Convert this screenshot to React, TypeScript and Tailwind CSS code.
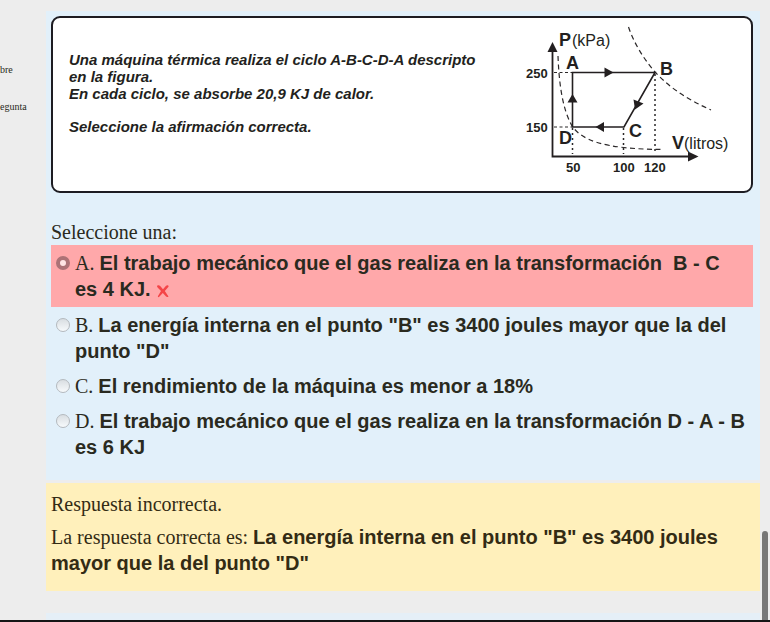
import { useState } from "react";

const sans = "font-['Liberation_Sans',Arial,sans-serif]";

function CycleDiagram() {
  return (
    <svg
      viewBox="520 20 220 160"
      width="220"
      height="160"
      role="img"
      aria-label="Diagrama P-V del ciclo A-B-C-D-A"
      className="shrink-0 font-['Liberation_Sans',Arial,sans-serif]"
      fill="#231f20"
    >
      <g fill="none" stroke="#2b2829" strokeWidth="1.2">
        <path strokeDasharray="5 3.5" d="M558 56C559 82 562 108 572 126C582 140 602 149 663 149.5" />
        <path strokeDasharray="5 3.5" d="M628.5 27C634 43 643 58 655 72C672 90 689 100 711 110" />
        <path strokeDasharray="3 2.5" d="M554 72.5H572M554 127H572" />
        <path strokeDasharray="2 3" d="M572.5 128V154M623.5 128V154M655 74V154" strokeWidth="1.5" />
      </g>
      <path d="M552.5 46V156.5H694" fill="none" stroke="#231f20" strokeWidth="1.8" />
      <path d="M572.5 127V72.5H655L624 127Z" fill="none" stroke="#231f20" strokeWidth="1.6" />
      <path d="M552.5 42L557.5 52H547.5Z" />
      <path d="M698.5 156.5L688 151.5V161.5Z" />
      <path d="M613.5 72.5L604.5 67.5V77.5Z" />
      <path d="M572.5 94L577.5 102.5H567.5Z" />
      <path d="M595.5 127L604 122V132Z" />
      <path d="M635 109.5L633.5 99.5L643.5 103.5Z" />
      <g fontSize="18" fontWeight="700">
        <text x="559" y="46">P</text>
        <text x="672" y="149">V</text>
        <text x="566" y="69">A</text>
        <text x="660" y="75">B</text>
        <text x="629" y="137">C</text>
        <text x="559" y="144">D</text>
      </g>
      <g fontSize="16">
        <text x="572" y="46">(kPa)</text>
        <text x="684" y="149">(litros)</text>
      </g>
      <g fontSize="13" fontWeight="700">
        <text x="526" y="78">250</text>
        <text x="526" y="132">150</text>
        <text x="566" y="172">50</text>
        <text x="613" y="172">100</text>
        <text x="644" y="172">120</text>
      </g>
    </svg>
  );
}

function WrongMark() {
  return (
    <svg viewBox="0 0 14 14" width="14" height="14" aria-label="Incorrecta" className="inline-block align-[-2px]">
      <path
        d="M1 2.5C1 1 3 .6 4.2 2L7 5.200L10 1.800C11.500 .6 13 1.500 12.500 2.800L8.800 7L12.500 12.500C11.500 13.500 10.500 13 9.800 12.200L6.800 8.900L3.500 12.600C2.500 13.600 1.500 13.200 2 12L5 7L1.800 3.700Z"
        fill="#f44548"
      />
    </svg>
  );
}

type Option = { id: string; text: string; wrong?: boolean };

const options: Option[] = [
  {
    id: "A",
    text: "El trabajo mecánico que el gas realiza en la transformación \u00a0B - C es\u00a04\u00a0KJ.",
    wrong: true,
  },
  { id: "B", text: 'La energía interna en el punto "B" es 3400 joules mayor que la del punto "D"' },
  { id: "C", text: "El rendimiento de la máquina es menor a 18%" },
  { id: "D", text: "El trabajo mecánico que el gas realiza en la transformación D - A - B es 6 KJ" },
];

export default function App() {
  const [selected, setSelected] = useState("A");

  return (
    <div className="flex min-h-screen flex-col bg-[#ededed] font-['Liberation_Serif','Times_New_Roman',serif] text-[#2a2a20]">
      <div className="flex grow">
        <aside className="w-[46px] shrink-0 pt-[64px] text-[10px] leading-3">
          <p>bre</p>
          <p className="mt-[25px]">egunta</p>
        </aside>

        <main className="flex min-w-0 grow flex-col pt-[11px]">
          <section className="bg-[#e2f0fa] pt-[5px] pr-[7px] pb-4 pl-[5px]">
            <div className="flex justify-between rounded-[9px] border-2 border-[#1d1c22] bg-white pt-[2px] pr-[11px] pb-[11px] pl-4">
              <div className={`${sans} pt-[31px] text-[15px] leading-[17px] font-bold text-[#231f20] italic`}>
                <p>
                  Una máquina térmica realiza el ciclo A-B-C-D-A descripto
                  <br />
                  en la figura.
                </p>
                <p>En cada ciclo, se absorbe 20,9 KJ de calor.</p>
                <p className="mt-4">Seleccione la afirmación correcta.</p>
              </div>
              <CycleDiagram />
            </div>

            <fieldset className="mt-[26px] text-[20px] leading-[26px]">
              <legend>Seleccione una:</legend>
              <div className="flex flex-col">
                {options.map((o) => (
                  <label
                    key={o.id}
                    className={`flex items-start gap-[5px] pt-[5px] pl-[5px] ${o.wrong ? "bg-[#ffa8aa] pb-[5px]" : "pb-1"}`}
                  >
                    <input
                      type="radio"
                      name="respuesta"
                      value={o.id}
                      checked={selected === o.id}
                      onChange={() => setSelected(o.id)}
                      className="mt-[6px] size-[14px] shrink-0 appearance-none rounded-full border border-[#b4b9be] bg-linear-to-b from-[#d9dee2] to-[#f7fafc] checked:border-4 checked:border-[#ad7276] checked:bg-[#ffe4e4] checked:bg-none"
                    />
                    <span>
                      {o.id}. <strong className={sans}>{o.text}</strong>
                      {o.wrong && (
                        <>
                          {" "}
                          <WrongMark />
                        </>
                      )}
                    </span>
                  </label>
                ))}
              </div>
            </fieldset>
          </section>

          <section className="mt-[3px] bg-[#fff0bb] px-[5px] pt-2 pb-[15px] text-[20px] leading-[26px] text-[#332b14]">
            <p>Respuesta incorrecta.</p>
            <p className="mt-[7px]">
              La respuesta correcta es:{" "}
              <strong className={sans}>La energía interna en el punto "B" es 3400 joules mayor que la del punto "D"</strong>
            </p>
          </section>

          <div className="mt-[22px] grow bg-[#e5eff7]" />
        </main>

        <div className="flex w-[10px] shrink-0 flex-col justify-end px-[2px]">
          <div className="h-[89px] rounded-t-full bg-[#777777]" />
        </div>
      </div>
      <div className="h-[2px] bg-[#151515]" />
    </div>
  );
}
